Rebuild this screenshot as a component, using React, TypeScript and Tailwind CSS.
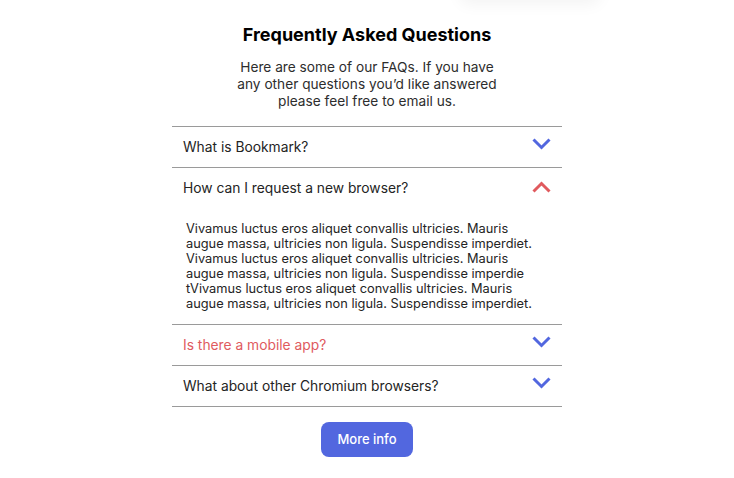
import { useState } from 'react';

const FAQS = [
  { q: 'What is Bookmark?', a: [] as string[] },
  {
    q: 'How can I request a new browser?',
    a: [
      'Vivamus luctus eros aliquet convallis ultricies. Mauris',
      'augue massa, ultricies non ligula. Suspendisse imperdiet.',
      'Vivamus luctus eros aliquet convallis ultricies. Mauris',
      'augue massa, ultricies non ligula. Suspendisse imperdie',
      'tVivamus luctus eros aliquet convallis ultricies. Mauris',
      'augue massa, ultricies non ligula. Suspendisse imperdiet.',
    ],
  },
  { q: 'Is there a mobile app?', a: [] },
  { q: 'What about other Chromium browsers?', a: [] },
];

function Chevron({ open }: { open: boolean }) {
  return (
    <svg
      width="19"
      height="12"
      viewBox="0 0 19 12"
      className={open ? 'rotate-180 -translate-y-[1px]' : '-translate-y-[3px]'}
    >
      <path
        d="M1.5 1.5l8 8 8-8"
        fill="none"
        stroke={open ? '#e05a5e' : '#5267df'}
        strokeWidth="3"
      />
    </svg>
  );
}

export default function App() {
  const [openIdx, setOpenIdx] = useState(1);

  return (
    <div
      className="relative min-h-[478px] w-full bg-white text-[#242a45]"
      style={{ fontFamily: 'Inter, "Open Sans", sans-serif' }}
    >
      {/* faint shadow of the card above */}
      <div className="pointer-events-none absolute -top-[40px] left-[460px] h-[40px] w-[140px] rounded-lg shadow-[0_4px_16px_rgba(0,0,0,0.05)]" />

      <div className="flex flex-col items-center pt-[24px]">
        <h2 className="text-[18px] font-bold leading-[22px] text-black">
          Frequently Asked Questions
        </h2>
        <p className="mt-[13px] w-[266px] text-center text-[13.7px] leading-[17px] text-[#2d2d2d]">
          Here are some of our FAQs. If you have any other questions you’d like answered please feel free to email us.
        </p>

        <div className="mt-[16px] w-[390px] border-t border-[#9a9a9a]">
          {FAQS.map((item, i) => {
            const open = openIdx === i;
            return (
              <div key={item.q} className="border-b border-[#9a9a9a]">
                <button
                  onClick={() => setOpenIdx(open ? -1 : i)}
                  className="flex h-[40px] w-full items-center justify-between pl-[11px] pr-[11px] text-left"
                >
                  <span
                    className={`text-[13.8px] ${
                      i === 2 ? 'text-[#e05a5e]' : 'text-[#242424]'
                    }`}
                  >
                    {item.q}
                  </span>
                  <Chevron open={open} />
                </button>
                {open && item.a.length > 0 && (
                  <div className="pb-[13px] pl-[14px] pt-[13px] text-[12.8px] leading-[15px] text-[#242424]">
                    {item.a.map((line) => (
                      <span key={line} className="block">
                        {line}
                      </span>
                    ))}
                  </div>
                )}
              </div>
            );
          })}
        </div>

        <button className="mt-[15px] h-[35px] w-[92px] rounded-lg bg-[#5267df] text-[13px] font-medium text-white">
          More info
        </button>
      </div>
    </div>
  );
}
